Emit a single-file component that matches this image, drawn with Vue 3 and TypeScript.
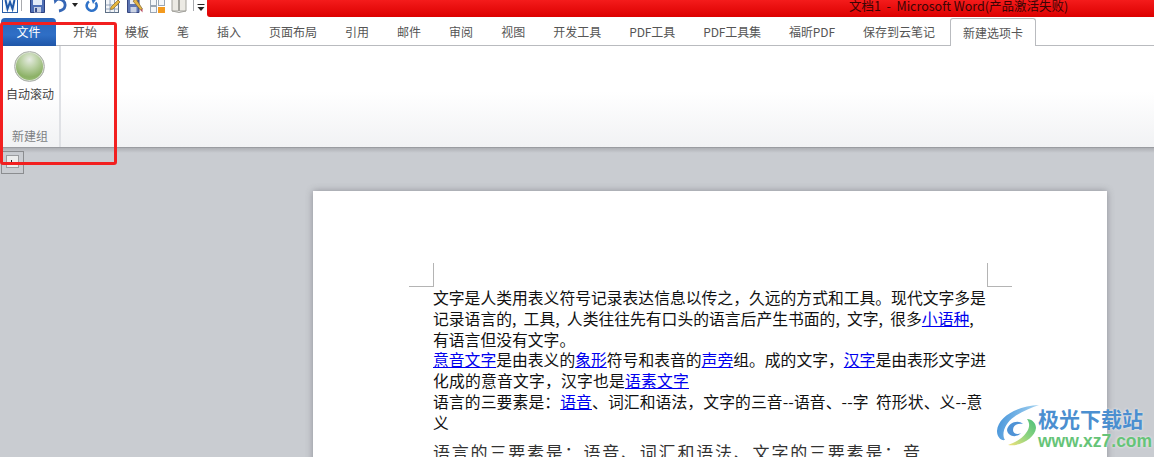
<script setup lang="ts">
const tabs = ["开始", "模板", "笔", "插入", "页面布局", "引用", "邮件", "审阅", "视图", "开发工具", "PDF工具", "PDF工具集", "福昕PDF", "保存到云笔记"]
</script>

<template>
  <div class="word">
    <header class="titlebar">
      <div class="qat">
        <svg class="ico" width="16" height="13" viewBox="0 0 16 13">
          <rect x="0.5" y="-3" width="15" height="15.5" fill="#fff" stroke="#2a5fa8" />
          <rect x="3" y="-3" width="10" height="13" fill="#e8f0fa" />
          <path d="M3.5 0 L5.5 9 L8 2 L10.5 9 L12.5 0" fill="none" stroke="#1e58a8" stroke-width="2" />
        </svg>
        <i class="qat-sep" style="margin-left: 3px" />
        <svg class="ico" style="margin-left: 8px" width="15" height="13" viewBox="0 0 15 13">
          <path d="M0.5 -2 H14.5 V12.5 H0.5 Z" fill="#4f6fb5" stroke="#2b3f7e" />
          <rect x="3" y="-2" width="9" height="7" fill="#e4ecf8" />
          <rect x="4" y="7" width="7" height="5.5" fill="#c5cfe4" />
          <rect x="5" y="8" width="2" height="4" fill="#3a4f8c" />
        </svg>
        <svg class="ico" style="margin-left: 8px" width="15" height="13" viewBox="0 0 15 13">
          <path d="M2 0 C 6 -2 13 0 12 6 C 11.500 9 9 10.500 6 11" fill="none" stroke="#3566b5" stroke-width="2.800" />
          <path d="M0.500 -2 L6 -1 L1.500 4 Z" fill="#3566b5" />
        </svg>
        <svg class="ico" style="margin-left: 4px" width="6" height="13" viewBox="0 0 6 13">
          <path d="M0 3 H6 L3 7 Z" fill="#222" />
        </svg>
        <svg class="ico" style="margin-left: 7px" width="13" height="13" viewBox="0 0 13 13">
          <path d="M10.500 2.500 A5 5 0 1 1 4 1.500" fill="none" stroke="#2f72c8" stroke-width="2.600" />
          <path d="M6 -2 L11.500 -1 L8 4 Z" fill="#2f72c8" />
        </svg>
        <svg class="ico" style="margin-left: 7px" width="15" height="13" viewBox="0 0 15 13">
          <rect x="0.500" y="-2" width="13" height="14.500" fill="#f3f5f8" stroke="#5d6f85" />
          <path d="M0.500 5 H13.500 M0.500 9 H13.500 M5 -2 V12.500 M9.500 -2 V12.500" stroke="#7f93ad" stroke-width="0.800" />
          <path d="M6 7 L13 0 L15 2 L8 9 L5.500 9.500 Z" fill="#e5b53d" stroke="#7d5c18" stroke-width="0.600" />
        </svg>
        <svg class="ico" style="margin-left: 7px" width="16" height="13" viewBox="0 0 16 13">
          <path d="M0.500 -2 H12 V12.500 H0.500 Z" fill="#5d76b4" stroke="#36467f" />
          <rect x="3" y="-2" width="7" height="6" fill="#e8edf6" />
          <rect x="3.500" y="7" width="6" height="5.500" fill="#cbd3e4" />
          <path d="M6 1 L13.500 10 L15.500 9 L9 -1 Z" fill="#e3b347" stroke="#70551f" stroke-width="0.600" />
          <path d="M13.500 10 L15.500 12.500 L15.500 9 Z" fill="#b8455a" />
        </svg>
        <svg class="ico" style="margin-left: 7px" width="15" height="13" viewBox="0 0 15 13">
          <rect x="0.500" y="-2" width="6" height="7.500" fill="#f4f6f9" stroke="#9aa6b4" />
          <rect x="0.500" y="6.500" width="6" height="6" fill="#f4f6f9" stroke="#9aa6b4" />
          <rect x="8.500" y="-2" width="6" height="7.500" fill="#f4f6f9" stroke="#9aa6b4" />
          <rect x="8" y="7" width="7" height="6" fill="#f39a1f" />
        </svg>
        <svg class="ico" style="margin-left: 6px" width="16" height="13" viewBox="0 0 16 13">
          <path d="M1 -2 H7.500 V11 H1 Z M8.500 -2 H15 V11 H8.500 Z" fill="#eceae4" stroke="#a3a29c" />
          <path d="M1 11 L8 12.500 L15 11" fill="none" stroke="#a3a29c" />
        </svg>
        <i class="qat-sep" style="margin-left: 6px" />
        <svg class="ico" style="margin-left: 3px" width="8" height="13" viewBox="0 0 8 13">
          <path d="M0.500 4.500 H7.500" stroke="#222" />
          <path d="M0.500 7 H7.500 L4 11 Z" fill="#222" />
        </svg>
      </div>
      <div class="title-red"><span>文档1&nbsp; - &nbsp;Microsoft Word(产品激活失败)</span></div>
    </header>

    <nav class="tabs">
      <div class="tab file">文件</div>
      <div class="tab first">开始</div>
      <div v-for="t in tabs.slice(1)" :key="t" class="tab" :class="{ latin: t.includes('PDF') }">{{ t }}</div>
      <div class="tab active">新建选项卡</div>
    </nav>

    <section class="ribbon">
      <div class="group">
        <div class="big-btn">
          <div class="sphere" />
          <div class="btn-label">自动滚动</div>
        </div>
        <div class="group-label">新建组</div>
      </div>
    </section>

    <main class="workspace">
      <div class="tabstop"><div class="tabstop-inner"><i /></div></div>
      <article class="page">
        <i class="crop left" />
        <i class="crop right" />
        <div class="body-text">
          <div class="line">文字是人类用表义符号记录表达信息以传之，久远的方式和工具。现代文字多是</div>
          <div class="line commas">记录语言的, 工具, 人类往往先有口头的语言后产生书面的, 文字, 很多<a>小语种</a>,</div>
          <div class="line">有语言但没有文字。</div>
          <div class="line"><a>意音文字</a>是由表义的<a>象形</a>符号和表音的<a>声旁</a>组。成的文字，<a>汉字</a>是由表形文字进</div>
          <div class="line roomy">化成的意音文字，汉字也是<a>语素文字</a></div>
          <div class="line slight">语言的三要素是：<a>语音</a>、词汇和语法，文字的三音--语音、--字&nbsp; 符形状、义--意</div>
          <div class="line">义</div>
          <div class="line wide">语言的三要素是：语音、词汇和语法、文字的三要素是：音</div>
        </div>
      </article>
    </main>

    <div class="annotation" />

    <div class="watermark">
      <svg width="44" height="44" viewBox="0 0 44 44">
        <defs>
          <linearGradient id="sw1" x1="0" y1="0" x2="1" y2="0.2">
            <stop offset="0" stop-color="#3f8fd8" />
            <stop offset="1" stop-color="#a9d6f2" />
          </linearGradient>
          <linearGradient id="sw2" x1="0" y1="1" x2="1" y2="0">
            <stop offset="0" stop-color="#f2e27a" />
            <stop offset="0.5" stop-color="#8fd47f" />
            <stop offset="1" stop-color="#4bbf7a" />
          </linearGradient>
        </defs>
        <path d="M43 1 C 22 2 2 12 1 27 C 1 33 5 37 9 36 C 5 30 9 19 18 13 C 26 7 35 4 43 1 Z" fill="url(#sw1)" />
        <path d="M11 26 C 12 19 22 15 27 20 C 22 19 17 21 17 26 C 17 30 22 31 25 29 C 21 34 12 33 11 26 Z" fill="#4f93d6" />
        <path d="M12 41 C 24 43 39 34 40 24 C 40 19 36 15 31 15 C 34 19 34 24 30 29 C 26 35 18 39 12 41 Z" fill="url(#sw2)" />
      </svg>
      <div class="wm-text">
        <div class="wm-cn">极光下载站</div>
        <div class="wm-url">www.xz7.com</div>
      </div>
    </div>
  </div>
</template>

<style scoped>
.word {
  position: relative;
  display: flex;
  flex-direction: column;
  width: 1154px;
  height: 457px;
  overflow: hidden;
  background: #fff;
  font-family: "Noto Sans CJK SC", "Noto Sans", sans-serif;
}
.titlebar {
  display: flex;
  height: 17px;
  flex: none;
}
.qat {
  display: flex;
  box-sizing: border-box;
  width: 207px;
  padding-left: 2px;
  background: #fff;
}
.ico {
  display: block;
  flex: none;
}
.qat-sep {
  display: block;
  width: 1px;
  height: 11px;
  background: #a8aaae;
}
.title-red {
  flex: 1;
  box-sizing: border-box;
  padding-left: 642px;
  overflow: hidden;
  border-bottom-left-radius: 3px;
  background: linear-gradient(#f41b1b, #dc0000);
  color: #3a0505;
  font-size: 12.5px;
  line-height: 11px;
  white-space: nowrap;
}
.tabs {
  display: flex;
  flex: none;
  box-sizing: border-box;
  height: 29px;
  padding: 1px 0 0 1px;
  border-bottom: 1px solid #b9bbbf;
  background: #fff;
}
.tab {
  box-sizing: border-box;
  height: 28px;
  padding: 0 14px;
  color: #555;
  font-size: 12px;
  line-height: 27px;
  white-space: nowrap;
}
.tab.latin {
  letter-spacing: -0.1px;
}
.tab.first {
  padding-left: 17px;
}
.tab.file {
  width: 55px;
  padding: 0;
  border-radius: 4px 4px 0 0;
  background: linear-gradient(#2b65b8, #2f6fc6 60%, #1f56a8);
  color: #fff;
  text-align: center;
}
.tab.active {
  width: 86px;
  height: 29px;
  margin-left: 1px;
  padding: 0 12px;
  border: 1px solid #b9bbbf;
  border-bottom: 0;
  border-radius: 3px 3px 0 0;
  background: #fff;
}
.ribbon {
  flex: none;
  box-sizing: border-box;
  height: 102px;
  padding-left: 1px;
  border-bottom: 1px solid #9a9ca1;
  background: linear-gradient(#fff 45%, #f1f2f4);
}
.group {
  display: flex;
  flex-direction: column;
  align-items: center;
  box-sizing: border-box;
  width: 60px;
  height: 100%;
  padding-top: 5px;
  border-right: 2px solid #dfe1e5;
}
.big-btn {
  display: flex;
  flex-direction: column;
  align-items: center;
}
.sphere {
  box-sizing: border-box;
  width: 31px;
  height: 31px;
  border: 1px solid #b0b3b0;
  border-radius: 50%;
  background: radial-gradient(circle at 50% 26%, #e6ebe2 0, #bcd2a6 32%, #8cb166 68%, #a9cd85 100%);
  box-shadow: inset 0 0 0 1px #d9e0d2;
}
.btn-label {
  margin-top: 3px;
  color: #444;
  font-size: 12px;
  line-height: 18px;
  white-space: nowrap;
}
.group-label {
  margin-top: 24px;
  color: #7d7f83;
  font-size: 12px;
  line-height: 18px;
}
.workspace {
  position: relative;
  flex: 1;
  display: flex;
  min-height: 0;
  background: linear-gradient(#aeb0b5 0, #c9ccd1 5px);
}
.tabstop {
  position: absolute;
  top: 3px;
  left: 1px;
  box-sizing: border-box;
  width: 23px;
  height: 23px;
  padding: 3px;
  border: 1px solid #8b8d90;
}
.tabstop-inner {
  position: relative;
  width: 13px;
  height: 13px;
  margin-left: 1px;
  border: 1px solid #9a9c9f;
  box-sizing: border-box;
  background: #eceded;
}
.tabstop-inner i {
  position: absolute;
  left: 4px;
  top: 4px;
  width: 3px;
  height: 3px;
  border-left: 1px solid #222;
  border-bottom: 1px solid #222;
}
.page {
  position: relative;
  box-sizing: border-box;
  width: 794px;
  height: 300px;
  margin: 43px 0 0 313px;
  padding: 97px 0 0 120px;
  background: #fff;
  box-shadow: 0 0 7px rgba(70, 72, 80, 0.45);
}
.crop {
  position: absolute;
  top: 72px;
  width: 24px;
  height: 23px;
  border-bottom: 1px solid #b4b4b4;
}
.crop.left {
  left: 96px;
  border-right: 1px solid #b4b4b4;
}
.crop.right {
  left: 674px;
  border-left: 1px solid #b4b4b4;
}
.body-text {
  color: #111;
  font-size: 15.8px;
}
.line {
  height: 20.8px;
  line-height: 20.8px;
  white-space: nowrap;
}
.line.commas {
  word-spacing: 3.7px;
}
.line.roomy {
  letter-spacing: 0.2px;
}
.line.slight {
  letter-spacing: 0.1px;
}
.line a {
  color: #0000ee;
  text-decoration: underline;
  text-underline-offset: 1px;
}
.line.wide {
  margin-top: 8px;
  color: #333;
  font-size: 17px;
  letter-spacing: 1.8px;
}
.annotation {
  position: absolute;
  top: 22px;
  left: 0;
  box-sizing: border-box;
  width: 117px;
  height: 143px;
  border: 3px solid #f21f1f;
  border-radius: 3px;
  pointer-events: none;
}
.watermark {
  position: absolute;
  top: 404px;
  left: 996px;
  display: flex;
}
.wm-text {
  margin-left: -2px;
  padding-top: 3px;
}
.wm-cn {
  color: #4b8fd0;
  font-size: 21px;
  font-weight: 700;
  line-height: 23px;
  text-shadow: 0 0 3px rgba(255, 255, 255, 0.8);
  white-space: nowrap;
}
.wm-url {
  margin-top: 3px;
  color: #66c478;
  font-family: "Liberation Sans", Arial, sans-serif;
  font-size: 17.500px;
  font-weight: 700;
  line-height: 17px;
  text-shadow: 0 0 3px rgba(255, 255, 255, 0.8);
  white-space: nowrap;
}
</style>

<style>
html,
body {
  overflow: hidden;
}
</style>
